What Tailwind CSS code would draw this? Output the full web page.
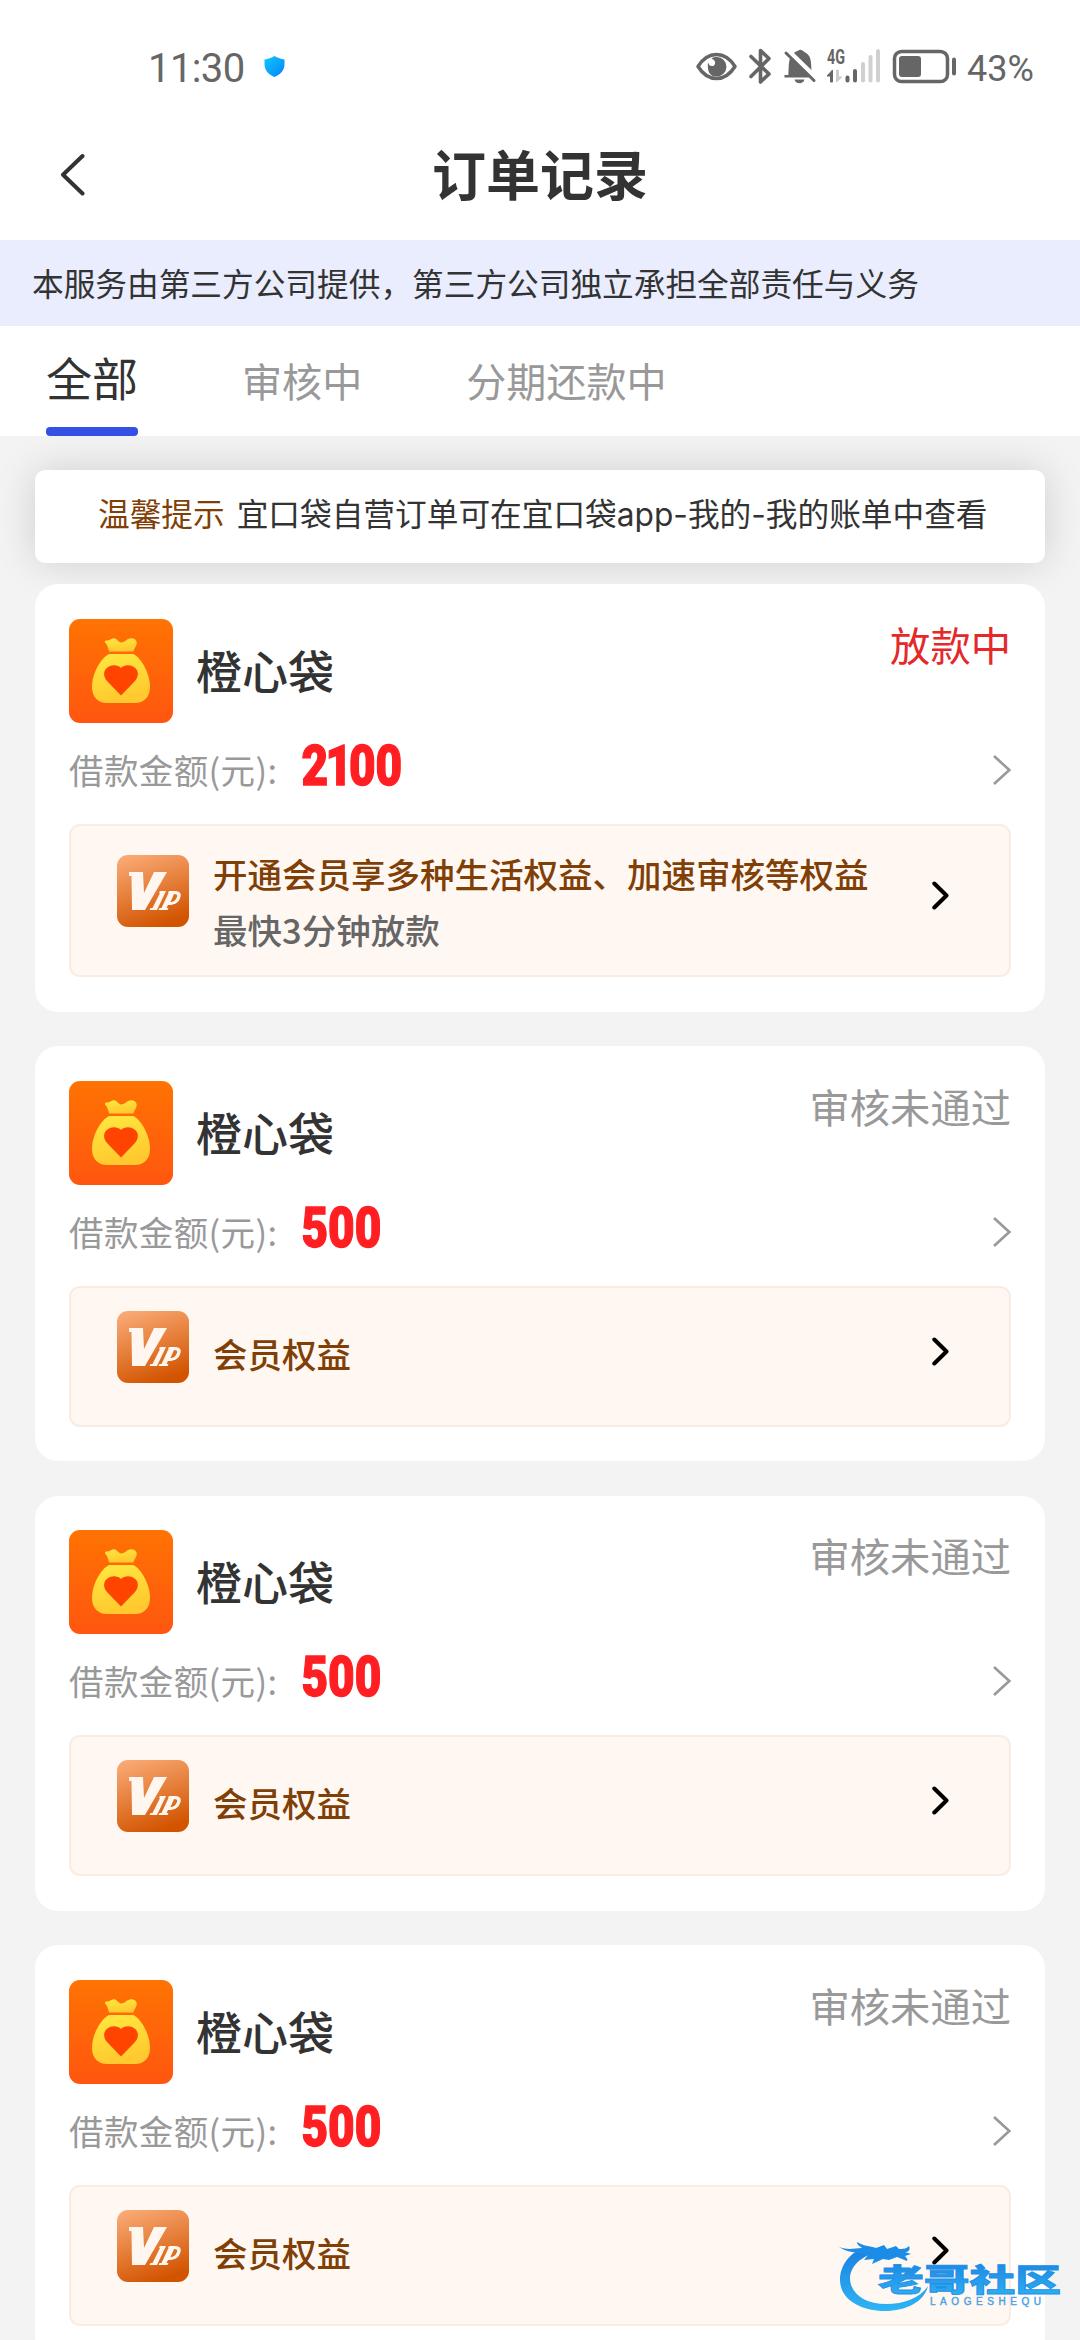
<!DOCTYPE html>
<html lang="zh-CN">
<head>
<meta charset="utf-8">
<title>订单记录</title>
<script src="https://cdn.jsdelivr.net/npm/@tailwindcss/browser@4"></script>
</head>
<body class="relative h-[2340px] w-[1080px] overflow-hidden bg-[#f3f3f3] font-['Noto_Sans_CJK_SC',sans-serif] text-[#333]">
<svg class="absolute size-0" aria-hidden="true">
  <defs>
    <linearGradient id="orange" x1="0" y1="0" x2="0" y2="1"><stop offset="0" stop-color="#ff7303"/><stop offset="1" stop-color="#ff560f"/></linearGradient>
    <linearGradient id="gold" x1="0" y1="0" x2="0.3" y2="1"><stop offset="0" stop-color="#ffe93f"/><stop offset="1" stop-color="#ffc92f"/></linearGradient>
    <linearGradient id="copper" x1="0.2" y1="0" x2="0.55" y2="1"><stop offset="0" stop-color="#f9a974"/><stop offset="1" stop-color="#d25400"/></linearGradient>
    <linearGradient id="sky" x1="0" y1="0" x2="1" y2="1"><stop offset="0" stop-color="#10c8fb"/><stop offset="1" stop-color="#0583fd"/></linearGradient>
    <linearGradient id="water" x1="0" y1="0" x2="0" y2="1"><stop offset="0" stop-color="#1a7fe0"/><stop offset="1" stop-color="#2fb4f4"/></linearGradient>
    <symbol id="bag" viewBox="0 0 104 104">
      <rect width="104" height="104" rx="11" fill="url(#orange)"/>
      <path d="M40 32.500C39 27 37 24.500 36 23.500C35.500 22 36.500 21.500 38 21.500C41 21.500 42 19.500 44.500 19.300C48 19 49 23 52 23.500C56 23.500 58 19 62.500 19.200C67 19.500 69 23 67 27C65.500 29.500 64.500 31 64.500 32.500Z" fill="url(#gold)"/>
      <path d="M40 35H64.500C72 39 81 54 81 68C81 78 75 84 66 84H38C29 84 23 78 23 68C23 54 32 39 40 35Z" fill="url(#gold)"/>
      <path d="M52 76.500L38.500 62.500C34 58 34 51.500 38.500 48.500C43 45 49 46 52 49C55 46 61 45 65.500 48.500C70 51.500 70 58 65.500 62.500Z" fill="#ff4400"/>
    </symbol>
    <symbol id="vip" viewBox="0 0 72 72">
      <rect width="72" height="72" rx="11" fill="url(#copper)"/>
      <path d="M12 17H26L27 38L37 17H50L28 55H15L14.500 21H12Z" fill="#fff7ef"/>
      <path d="M43 36H49L40 55H32.500L33.500 53H35.500L43 38H42ZM52 36H58C64 36 65 40 62.500 44.500C60.500 48.500 57 50 51 50L49.500 53H51.500L50.500 55H41.500L42.500 53H44.500L51.500 38H51ZM57 39L53.500 47C57.500 47 58.800 44.500 60 42C60.800 40 60 39 57 39Z" fill="#fff7ef" fill-rule="evenodd"/>
    </symbol>
    <symbol id="next" viewBox="0 0 18 30"><path d="M1 1L16.300 15L1 29" fill="none" stroke="#999" stroke-width="2.600"/></symbol>
    <symbol id="go" viewBox="0 0 17 29"><path d="M2.300 2.500L14.500 14.500L2.300 26.500" fill="none" stroke="#000" stroke-width="4" stroke-linecap="round" stroke-linejoin="round"/></symbol>
  </defs>
</svg>

<header class="h-[240px] bg-white">
  <div class="flex h-[110px] pl-[148px] font-[Roboto,sans-serif] text-[#666]">
    <div class="mt-[45px] w-[116px] text-[40px] leading-[48px] tracking-[-0.6px]">11:30</div>
    <svg class="mt-[56px] h-[21px] w-[21px]" viewBox="0 0 21 21"><path d="M10.500 0C13.500 2 17 2.800 20.500 3.500V8C20.500 14.500 16.500 18.500 10.500 21C4.500 18.500 .5 14.500 .5 8V3.500C4 2.800 7.500 2 10.500 0Z" fill="url(#sky)"/></svg>
    <svg class="ml-[405px] mt-[44px] h-[44px] w-[277px]" viewBox="690 44 277 44" fill="none">
      <path d="M698 66.500C708 50.500 725 50.500 735 66.500C725 82.500 708 82.500 698 66.500Z" stroke="#666" stroke-width="3.500" stroke-linejoin="round"/>
      <path d="M708 62C707 72 710 76.500 716.500 76.500A9.700 9.700 0 0 0 717 57.100C713 57 711 58.500 712 59C716 60 716 65 713 66C710 66.500 708.500 64.500 708 62Z" fill="#666"/>
      <path d="M751 56.500L769 74L760.500 82V50.500L769 58.500L751 76.500" stroke="#666" stroke-width="3.600" stroke-linecap="round" stroke-linejoin="round"/>
      <path d="M788 77.500C789 73 788 65 790 58L809.500 77.500ZM784.500 75H808V77.500H784.500ZM794 53C796 51 798 51 799.500 50C802 49 803.500 52 806 53C811 56 811 61 811.500 70ZM794.500 79.500H804.500C803.500 84.500 795.500 84.500 794.500 79.500Z" fill="#666"/>
      <path d="M786 53L814 80.500" stroke="#666" stroke-width="3" stroke-linecap="round"/>
      <text x="827" y="64" font-family="Liberation Sans Narrow, Roboto" font-weight="700" font-size="20" textLength="18" lengthAdjust="spacingAndGlyphs" fill="#666">4G</text>
      <path d="M827 76L832.500 70V82H830.500V76Z" fill="#666" stroke="#666"/>
      <path d="M836.500 70V82L842 77H838.500V70Z" fill="#ccc" stroke="#ccc"/>
      <path d="M847.500 77.500V80.500M855 71V80.500" stroke="#666" stroke-width="4" stroke-linecap="round"/>
      <path d="M863 64V80.500M870.500 57V80.500M878 51V80.500" stroke="#d0d0d0" stroke-width="4" stroke-linecap="round"/>
      <rect x="894.500" y="51.500" width="53" height="30" rx="7" stroke="#666" stroke-width="3.500"/>
      <rect x="899" y="56" width="22" height="21" rx="3" fill="#666"/>
      <path d="M954 59.500V73.500" stroke="#666" stroke-width="4" stroke-linecap="round"/>
    </svg>
    <div class="mt-[47px] text-[36px] leading-[44px]">43%</div>
  </div>
  <div class="flex h-[130px] items-start">
    <svg class="ml-[60px] mt-[43px] h-[43px] w-[25px]" viewBox="0 0 25 43"><path d="M22.500 3L3 21.700L22.500 40.500" fill="none" stroke="#333" stroke-width="4" stroke-linecap="round" stroke-linejoin="round"/></svg>
    <h1 class="ml-[347px] mt-[23px] text-[54px] font-bold leading-[80px]">订单记录</h1>
  </div>
</header>

<div class="h-[86px] bg-[#eaedfd] pl-[32px] text-[31.68px] leading-[84px]">本服务由第三方公司提供，第三方公司独立承担全部责任与义务</div>

<nav class="flex h-[110px] bg-white pl-[46px] text-[40.1px] leading-[107px] text-[#999]">
  <div class="flex w-[92px] flex-col justify-between text-[46px] text-[#333]"><span class="h-[100px] leading-[101px]">全部</span><span class="h-[9px] w-[92px] rounded-[4px] bg-[#3550e4]"></span></div>
  <div class="ml-[104px]">审核中</div>
  <div class="ml-[104px]">分期还款中</div>
</nav>

<main class="px-[35px] pt-[34px]">
  <div class="h-[93px] rounded-[10px] bg-white pl-[63px] font-[Inter,'Noto_Sans_CJK_SC',sans-serif] text-[31.68px] leading-[90px] shadow-[0_0_40px_rgba(0,0,0,0.15)]"><span class="mr-[12px] text-[#7f3f07]">温馨提示</span><span>宜口袋自营订单可在宜口袋app-我的-我的账单中查看</span></div>

  <section class="mt-[21px] h-[428px] rounded-[23px] bg-white px-[34px] pt-[35px]">
    <div class="flex h-[104px]">
      <svg class="size-[104px]"><use href="#bag"/></svg>
      <h2 class="ml-[23px] mt-[18px] text-[46px] font-medium leading-[64px]">橙心袋</h2>
      <span class="ml-auto mt-[-5px] text-[40.3px] leading-[60px] text-[#e5282a]">放款中</span>
    </div>
    <div class="flex h-[101px]">
      <span class="mt-[21px] w-[230px] text-[34.56px] leading-[50px] tracking-[0.35px] text-[#999]">借款金额(元):</span>
      <svg class="mt-[15px] h-[56px] w-[110px]" viewBox="0 0 110 56"><text x="3" y="47" dx="0 -3 -4" transform="scale(.82 1)" class="font-[Roboto,sans-serif] text-[56px] font-black" fill="#ff1f23" stroke="#ff1f23" stroke-width="1.400">2100</text></svg>
      <svg class="ml-auto mt-[32px] h-[30px] w-[18px]"><use href="#next"/></svg>
    </div>
    <div class="flex h-[153px] rounded-[11px] border-2 border-[#f9ece3] bg-[#fff7f1] pl-[46px] pr-[60px]">
      <svg class="mt-[29px] size-[72px]"><use href="#vip"/></svg>
      <div class="ml-[24px] mt-[19px] text-[34.5px] font-medium leading-[56px]">
        <p class="whitespace-nowrap text-[#7f3f07]">开通会员享多种生活权益、加速审核等权益</p>
        <p class="text-[#666]">最快3分钟放款</p>
      </div>
      <svg class="ml-auto mt-[55px] h-[29px] w-[17px]"><use href="#go"/></svg>
    </div>
  </section>

  <section class="mt-[34px] h-[415px] rounded-[23px] bg-white px-[34px] pt-[35px]">
    <div class="flex h-[104px]">
      <svg class="size-[104px]"><use href="#bag"/></svg>
      <h2 class="ml-[23px] mt-[18px] text-[46px] font-medium leading-[64px]">橙心袋</h2>
      <span class="ml-auto mt-[-5px] text-[40.3px] leading-[60px] text-[#999]">审核未通过</span>
    </div>
    <div class="flex h-[101px]">
      <span class="mt-[21px] w-[230px] text-[34.56px] leading-[50px] tracking-[0.35px] text-[#999]">借款金额(元):</span>
      <svg class="mt-[15px] h-[56px] w-[110px]" viewBox="0 0 110 56"><text x="3" y="47" transform="scale(.82 1)" class="font-[Roboto,sans-serif] text-[56px] font-black" fill="#ff1f23" stroke="#ff1f23" stroke-width="1.400">500</text></svg>
      <svg class="ml-auto mt-[32px] h-[30px] w-[18px]"><use href="#next"/></svg>
    </div>
    <div class="flex h-[141px] rounded-[11px] border-2 border-[#f9ece3] bg-[#fff7f1] pl-[46px] pr-[60px]">
      <svg class="mt-[23px] size-[72px]"><use href="#vip"/></svg>
      <p class="ml-[24px] mt-[37px] text-[34.5px] font-medium leading-[56px] text-[#7f3f07]">会员权益</p>
      <svg class="ml-auto mt-[49px] h-[29px] w-[17px]"><use href="#go"/></svg>
    </div>
  </section>

  <section class="mt-[35px] h-[415px] rounded-[23px] bg-white px-[34px] pt-[34px]">
    <div class="flex h-[104px]">
      <svg class="size-[104px]"><use href="#bag"/></svg>
      <h2 class="ml-[23px] mt-[18px] text-[46px] font-medium leading-[64px]">橙心袋</h2>
      <span class="ml-auto mt-[-5px] text-[40.3px] leading-[60px] text-[#999]">审核未通过</span>
    </div>
    <div class="flex h-[101px]">
      <span class="mt-[21px] w-[230px] text-[34.56px] leading-[50px] tracking-[0.35px] text-[#999]">借款金额(元):</span>
      <svg class="mt-[15px] h-[56px] w-[110px]" viewBox="0 0 110 56"><text x="3" y="47" transform="scale(.82 1)" class="font-[Roboto,sans-serif] text-[56px] font-black" fill="#ff1f23" stroke="#ff1f23" stroke-width="1.400">500</text></svg>
      <svg class="ml-auto mt-[32px] h-[30px] w-[18px]"><use href="#next"/></svg>
    </div>
    <div class="flex h-[141px] rounded-[11px] border-2 border-[#f9ece3] bg-[#fff7f1] pl-[46px] pr-[60px]">
      <svg class="mt-[23px] size-[72px]"><use href="#vip"/></svg>
      <p class="ml-[24px] mt-[37px] text-[34.5px] font-medium leading-[56px] text-[#7f3f07]">会员权益</p>
      <svg class="ml-auto mt-[49px] h-[29px] w-[17px]"><use href="#go"/></svg>
    </div>
  </section>

  <section class="mt-[34px] h-[415px] rounded-[23px] bg-white px-[34px] pt-[35px]">
    <div class="flex h-[104px]">
      <svg class="size-[104px]"><use href="#bag"/></svg>
      <h2 class="ml-[23px] mt-[18px] text-[46px] font-medium leading-[64px]">橙心袋</h2>
      <span class="ml-auto mt-[-5px] text-[40.3px] leading-[60px] text-[#999]">审核未通过</span>
    </div>
    <div class="flex h-[101px]">
      <span class="mt-[21px] w-[230px] text-[34.56px] leading-[50px] tracking-[0.35px] text-[#999]">借款金额(元):</span>
      <svg class="mt-[15px] h-[56px] w-[110px]" viewBox="0 0 110 56"><text x="3" y="47" transform="scale(.82 1)" class="font-[Roboto,sans-serif] text-[56px] font-black" fill="#ff1f23" stroke="#ff1f23" stroke-width="1.400">500</text></svg>
      <svg class="ml-auto mt-[32px] h-[30px] w-[18px]"><use href="#next"/></svg>
    </div>
    <div class="flex h-[141px] rounded-[11px] border-2 border-[#f9ece3] bg-[#fff7f1] pl-[46px] pr-[60px]">
      <svg class="mt-[23px] size-[72px]"><use href="#vip"/></svg>
      <p class="ml-[24px] mt-[37px] text-[34.5px] font-medium leading-[56px] text-[#7f3f07]">会员权益</p>
      <svg class="ml-auto mt-[49px] h-[29px] w-[17px]"><use href="#go"/></svg>
    </div>
  </section>
</main>

<!-- community logo stamped over the page corner -->
<svg class="absolute left-[830px] top-[2235px] h-[80px] w-[240px]" viewBox="830 2235 240 80">
  <path d="M866 2247C850 2252 840 2265 840 2280C840 2299 860 2311 885 2311C906 2311 924 2302 928 2286C920 2298 904 2304 886 2304C865 2304 851 2294 850 2279C850 2267 860 2257 875 2253Z" fill="url(#water)"/>
  <path d="M838 2246C844 2250 852 2249 862 2248C860 2246 857 2245 857 2242C863 2246 870 2246 876 2248L884 2245L887 2249L896 2246L899 2249C903 2249 906 2249 909 2246C911 2250 908 2252 905 2252L911 2254L905 2256C907 2258 908 2260 907 2261L897 2257L889 2260L883 2259L872 2264L874 2259L864 2260L868 2255C858 2252 846 2253 838 2246Z" fill="#1b8de9"/>
  <text x="878" y="2291" font-family="Noto Sans CJK SC" font-weight="900" font-size="31" textLength="183" lengthAdjust="spacingAndGlyphs" fill="url(#water)" stroke="#1f8fe8" stroke-width=".8">老哥社区</text>
  <text x="930" y="2304.500" font-family="Liberation Sans" font-size="10" textLength="111" fill="#4ba1e4" stroke="#4ba1e4" stroke-width=".4">LAOGESHEQU</text>
</svg>
</body>
</html>
